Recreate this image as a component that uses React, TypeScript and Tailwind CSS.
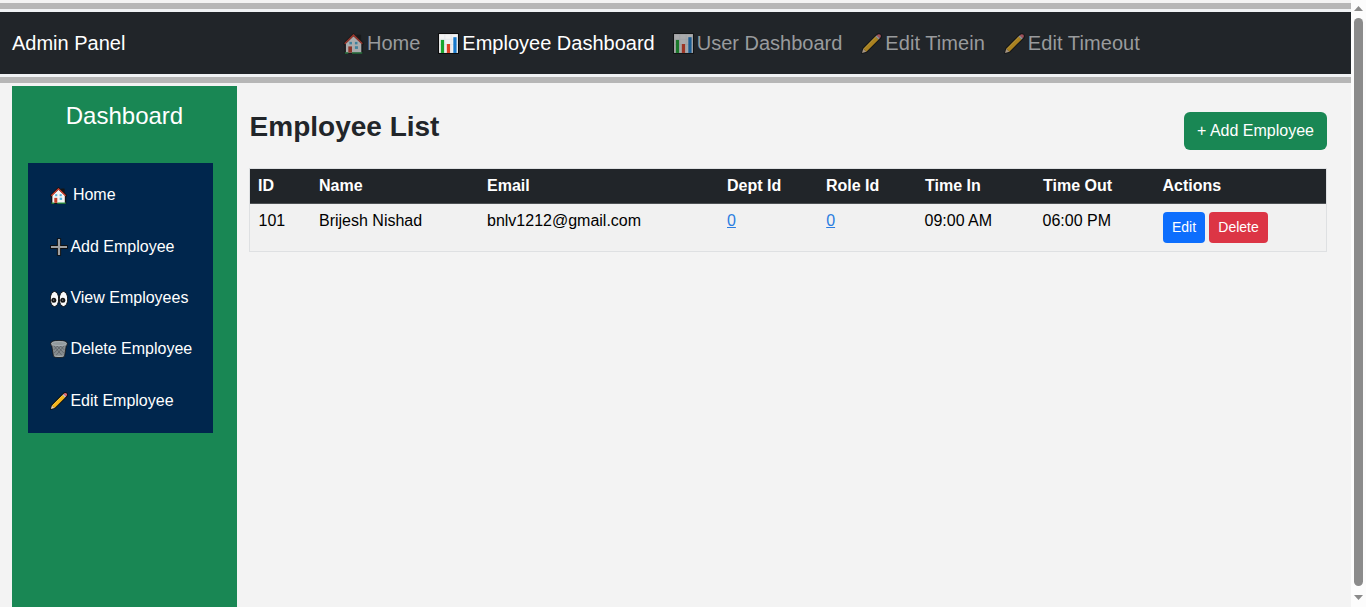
import React from "react";

type IconProps = { className?: string };

function HouseIcon({ className }: IconProps) {
  return (
    <svg viewBox="0.3 0.2 19.4 19.4" className={className}>
      <path d="M10 0.8 L0.9 9.8 L2.2 12 V19.3 H18.2 V12 L19.3 9.8 L16.4 6.5 V2.5 H13.5 V4.3 Z" fill="#151515" stroke="#151515" strokeWidth="1.2" strokeLinejoin="round" />
      <path d="M3 10 L10 3.2 L17.2 10 V18.4 H3 Z" fill="#f4f4f4" />
      <path d="M1.9 10.2 L10 2.2 L18.1 10.2" fill="none" stroke="#d8412f" strokeWidth="1.4" />
      <rect x="5.2" y="12.6" width="3.4" height="5.7" fill="#c43d27" />
      <rect x="11.3" y="12.4" width="2.8" height="2.5" fill="#52b5dc" />
      <rect x="6.2" y="8.4" width="2.4" height="2.3" fill="#52b5dc" />
      <rect x="11.3" y="8.4" width="2.4" height="2.3" fill="#52b5dc" />
      <path d="M2 18.7 H5.2 M8.6 18.7 H18.2" stroke="#2b9a4a" strokeWidth="1.4" />
    </svg>
  );
}

function ChartIcon({ className }: IconProps) {
  return (
    <svg viewBox="0 0 20 20" className={className}>
      <rect x="0" y="0" width="20" height="20" rx="0.8" fill="#0b0b0b" />
      <rect x="1" y="1" width="18" height="18" fill="#f2f2f2" />
      <path d="M6.5 1V19 M12.5 1V19 M1 6H19 M1 11H19" stroke="#dce1e5" strokeWidth="0.6" />
      <rect x="2.7" y="6.6" width="3.1" height="12.4" fill="#19a52c" />
      <rect x="8.4" y="10.5" width="3.1" height="8.5" fill="#df3f23" />
      <rect x="14.6" y="4" width="3.1" height="15" fill="#1678cb" />
    </svg>
  );
}

function PencilIcon({ className }: IconProps) {
  return (
    <svg viewBox="0 0 20 20" className={className}>
      <path d="M0.1 19.9 L1.3 14.4 L15.1 0.6 Q17 -0.5 19.1 0.9 Q20.6 3 19.4 4.9 L5.6 18.7 Z" fill="#101010" />
      <path d="M2.2 14.9 L13.9 3.2 L16.8 6.1 L5.1 17.8 Z" fill="#f4b51c" />
      <path d="M2.8 15.1 L14.2 3.7" stroke="#ffd34d" strokeWidth="0.8" />
      <path d="M1 19 L2.1 14.9 L5.1 17.9 Z" fill="#efd3b3" />
      <path d="M13.8 3.4 L15.1 2.1 L17.9 4.9 L16.6 6.2 Z" fill="#c9d0d4" />
      <path d="M15 2.3 L16 1.4 Q17.4 0.8 18.5 1.7 Q19.3 2.8 18.7 4 L17.7 5 Z" fill="#e56b76" />
    </svg>
  );
}

function PlusIcon({ className }: IconProps) {
  return (
    <svg viewBox="0 0 18 18" className={className}>
      <path d="M9 0.2V17.8 M0.2 9H17.8" stroke="#101010" strokeWidth="4.2" />
      <path d="M9 1V17 M1 9H17" stroke="#a0a0a0" strokeWidth="2.2" />
    </svg>
  );
}

function EyesIcon({ className }: IconProps) {
  return (
    <svg viewBox="0 0 18 18" className={className}>
      <ellipse cx="4.5" cy="9" rx="4.2" ry="7.5" fill="#fafafa" stroke="#0b0b0b" strokeWidth="0.9" />
      <ellipse cx="13.5" cy="9" rx="4.2" ry="7.5" fill="#fafafa" stroke="#0b0b0b" strokeWidth="0.9" />
      <circle cx="3.8" cy="10.3" r="2.5" fill="#141414" />
      <circle cx="12.8" cy="10.3" r="2.5" fill="#141414" />
      <circle cx="3.7" cy="10" r="0.6" fill="#ccc" />
      <circle cx="12.7" cy="10" r="0.6" fill="#ccc" />
    </svg>
  );
}

function TrashIcon({ className }: IconProps) {
  return (
    <svg viewBox="0 0 18 18" className={className}>
      <path d="M0.8 3.2 Q1 0.4 9 0.4 T17.2 3.2 V5.2 L16.2 6 L14.6 16.2 Q13.8 17.6 9 17.6 T3.4 16.2 L1.8 6 L0.8 5.2 Z" fill="#858b8e" stroke="#161616" strokeWidth="0.8" />
      <path d="M4 6 L12.5 16 M7.2 6 L13.8 13 M10.5 6 L14.4 10 M14 6 L5.5 16 M10.8 6 L4.2 13 M7.5 6 L3.6 10" stroke="#50565a" strokeWidth="0.6" />
      <ellipse cx="9" cy="3.6" rx="7.4" ry="2" fill="#929a9d" stroke="#aab1b4" strokeWidth="0.9" />
      <path d="M4.6 15.9 Q9 17 13.4 15.9" stroke="#b8bfc2" strokeWidth="0.9" fill="none" />
    </svg>
  );
}

const navItems = [
  { label: "Home", Icon: HouseIcon, color: "text-[#999b9d]", extra: "" },
  { label: "Employee Dashboard", Icon: ChartIcon, color: "text-white", extra: "" },
  { label: "User Dashboard", Icon: ChartIcon, color: "text-[#999b9d]", extra: "" },
  { label: "Edit Timein", Icon: PencilIcon, color: "text-[#999b9d]", extra: "ml-px tracking-[0.05px]" },
  { label: "Edit Timeout", Icon: PencilIcon, color: "text-[#999b9d]", extra: "ml-px tracking-[0.08px]" },
];

const sideItems = [
  { label: "Home", Icon: HouseIcon, gap: "gap-[5.5px]", size: "size-[17px]" },
  { label: "Add Employee", Icon: PlusIcon, gap: "gap-[2px]", size: "size-[18px]" },
  { label: "View Employees", Icon: EyesIcon, gap: "gap-[2px]", size: "size-[18px] translate-y-px" },
  { label: "Delete Employee", Icon: TrashIcon, gap: "gap-[2px]", size: "size-[18px]" },
  { label: "Edit Employee", Icon: PencilIcon, gap: "gap-[2px]", size: "size-[18px]" },
];

const headings = ["ID", "Name", "Email", "Dept Id", "Role Id", "Time In", "Time Out", "Actions"];

export default function App() {
  return (
    <div className="flex h-[607px] w-full overflow-hidden bg-[#f3f3f3] font-['Liberation_Sans',Arial,sans-serif] text-base leading-6 text-black">
      <div className="flex min-w-0 flex-1 flex-col">
        <header className="shrink-0 pt-[3px]">
          <div className="h-1.5 bg-[#b6b6b6]" />
          <div className="h-[3px] bg-[#f0f2f4]" />
          <nav className="flex h-[62px] items-center bg-[#212529] pl-3 text-xl">
            <a className="w-[331px] text-white">Admin Panel</a>
            <div className="flex gap-[18px]">
              {navItems.map(({ label, Icon, color, extra }) => (
                <a key={label} className={`flex items-center gap-[3px] whitespace-nowrap ${color} ${extra}`}>
                  <Icon className={color === "text-white" ? "size-[21px] shrink-0" : "size-[21px] shrink-0 opacity-65"} />
                  {label}
                </a>
              ))}
            </div>
          </nav>
          <div className="h-[3px] bg-[#f0f2f4]" />
          <div className="h-1.5 bg-[#b6b6b6]" />
          <div className="h-[3px]" />
        </header>
        <div className="flex min-h-0 flex-1 pl-3">
          <aside className="w-[225px] shrink-0 bg-[#198754] px-4 pt-[15px]">
            <h4 className="text-center text-2xl leading-[29px] text-white">Dashboard</h4>
            <ul className="mt-[33px] flex h-[270px] w-[185px] flex-col bg-[#00264d] pt-[6.5px] text-white">
              {sideItems.map(({ label, Icon, gap, size }) => (
                <li key={label} className="h-[51.4px] pl-[22.4px]">
                  <a className={`flex h-[51.4px] items-center whitespace-nowrap ${gap}`}>
                    <Icon className={`shrink-0 ${size}`} />
                    {label}
                  </a>
                </li>
              ))}
            </ul>
          </aside>
          <main className="flex-1 pl-3 pr-6 pt-[26px]">
            <div className="flex items-start justify-between">
              <h2 className="pl-[0.6px] text-[28px] font-bold leading-[30px] text-[#212529]">Employee List</h2>
              <button className="h-[38px] w-[143px] whitespace-nowrap rounded-md bg-[#198754] text-white">+ Add Employee</button>
            </div>
            <div className="mt-[18px] border border-[#dee0e2] bg-[#f1f1f1]">
              <table className="w-full table-fixed border-separate border-spacing-0 text-left">
                <colgroup>
                  <col className="w-[61px]" />
                  <col className="w-[168px]" />
                  <col className="w-[240px]" />
                  <col className="w-[99px]" />
                  <col className="w-[99px]" />
                  <col className="w-[118px]" />
                  <col className="w-[120px]" />
                  <col />
                </colgroup>
                <thead className="bg-[#212529] text-white">
                  <tr>
                    {headings.map((heading) => (
                      <th key={heading} className="h-[35px] border-b border-[#4d5154] pb-px pl-2 font-bold last:pl-[7.5px]">{heading}</th>
                    ))}
                  </tr>
                </thead>
                <tbody>
                  <tr className="align-top">
                    <td className="pl-[8.5px] pt-[5px]">101</td>
                    <td className="pl-2 pt-[5px]">Brijesh Nishad</td>
                    <td className="pl-2 pt-[5px]">bnlv1212@gmail.com</td>
                    <td className="pl-2 pt-[5px]"><a className="text-[#2b7de0] underline">0</a></td>
                    <td className="pl-[8.2px] pt-[5px]"><a className="text-[#2b7de0] underline">0</a></td>
                    <td className="pl-[7.5px] pt-[5px]">09:00 AM</td>
                    <td className="pl-[7.5px] pt-[5px]">06:00 PM</td>
                    <td className="h-[47px] pl-2 pt-2">
                      <div className="flex gap-1 text-sm leading-[21px] text-white">
                        <button className="h-[31px] w-[42px] rounded bg-[#0d6efd]">Edit</button>
                        <button className="h-[31px] w-[59px] rounded bg-[#dc3545]">Delete</button>
                      </div>
                    </td>
                  </tr>
                </tbody>
              </table>
            </div>
          </main>
        </div>
      </div>
      <div className="flex w-[15px] shrink-0 flex-col items-center bg-[#fcfcfc] pt-1.5">
        <svg viewBox="0 0 9 5" className="h-[5px] w-[9px]"><path d="M0 5 L4.5 0 L9 5Z" fill="#8a8a8a" /></svg>
        <div className="mt-[7px] h-[568px] w-[9px] rounded-full bg-[#8b8b8b]" />
        <svg viewBox="0 0 9 5" className="mt-[9px] h-[5px] w-[9px]"><path d="M0 0H9L4.5 5Z" fill="#8a8a8a" /></svg>
      </div>
    </div>
  );
}
